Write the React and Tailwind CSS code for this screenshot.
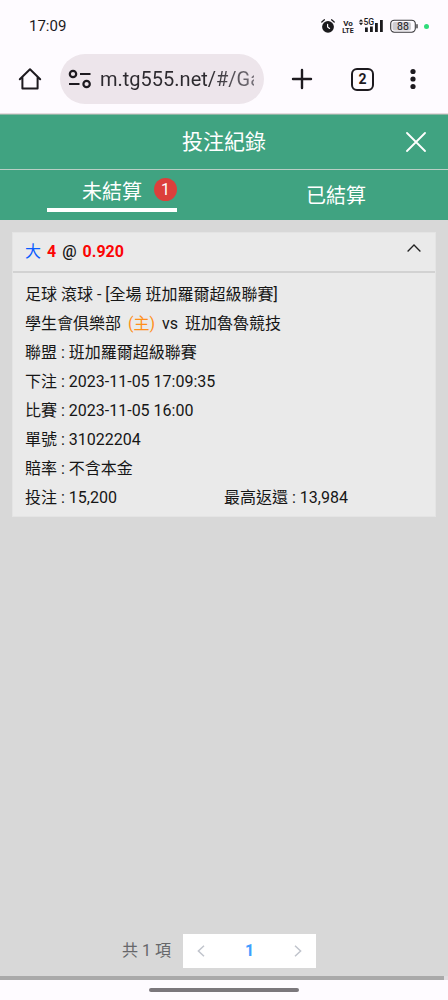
import React, { useState } from "react";

const details = [
  { label: "聯盟", value: "班加羅爾超級聯賽" },
  { label: "下注", value: "2023-11-05 17:09:35" },
  { label: "比賽", value: "2023-11-05 16:00" },
  { label: "單號", value: "31022204" },
  { label: "賠率", value: "不含本金" },
];

function StatusBar() {
  return (
    <div className="flex h-[52px] items-center justify-between pl-[29px] pr-[19px] text-[#1b1a1d]">
      <span className="text-[15px]">17:09</span>
      <div className="flex items-center">
        {/* alarm */}
        <svg className="h-4 w-4" viewBox="0 0 16 16" fill="none" aria-hidden="true">
          <circle cx="8" cy="8.8" r="5.9" fill="currentColor" />
          <path d="M1.8 4 4.4 1.8M14.2 4 11.6 1.8" stroke="currentColor" strokeWidth="1.3" strokeLinecap="round" />
          <path d="M7.6 6.4v2.6l2 1.4" stroke="#fefbff" strokeWidth="1.2" strokeLinecap="round" />
        </svg>
        <svg className="ml-[6px] h-4 w-3" viewBox="0 0 12 16" fill="currentColor" aria-hidden="true">
          <text x="6" y="7.6" fontSize="8" fontWeight="700" textAnchor="middle">Vo</text>
          <text x="6" y="14.6" fontSize="7" fontWeight="700" textAnchor="middle">LTE</text>
        </svg>
        {/* 5G signal */}
        <svg className="ml-1 h-4 w-[26px]" viewBox="0 0 26 16" fill="currentColor" aria-hidden="true">
          <path d="M3 1.2 5.2 3.6H.8ZM3 7.2.8 4.8H5.2Z" />
          <text x="5.4" y="7.2" fontSize="8.6" fontWeight="500">5G</text>
          <rect x="7" y="9.5" width="2.8" height="4.5" />
          <rect x="12" y="8.5" width="2.8" height="5.5" />
          <rect x="17" y="5" width="2.8" height="9" />
          <rect x="22" y="2" width="2.8" height="12" />
        </svg>
        {/* battery */}
        <svg className="ml-[6px] h-4 w-7" viewBox="0 0 28 16" aria-hidden="true">
          <rect x=".7" y="2.2" width="24.6" height="12" rx="3.6" fill="#fefbff" stroke="#3a393c" strokeWidth="1.1" />
          <rect x="2.5" y="4" width="18.5" height="8.4" rx="2" fill="#cfcdd1" />
          <rect x="26.3" y="6" width="1.4" height="4.4" rx=".7" fill="#3a393c" />
          <text x="13" y="12" fontSize="10.5" textAnchor="middle" fill="#1b1a1d">88</text>
        </svg>
        <span className="ml-[6px] h-[5px] w-[5px] rounded-full bg-[#2fdc7a]" />
      </div>
    </div>
  );
}

function BrowserBar() {
  return (
    <div className="flex h-[62px] items-start border-b border-[#e6dade] pl-[18px] pr-8 pt-[2px] text-[#1d1a1f]">
      <button type="button" aria-label="首頁" className="flex h-[50px] w-6 items-center">
        <svg className="h-6 w-6" viewBox="0 0 24 24" fill="none" stroke="currentColor" strokeWidth="2" strokeLinejoin="round" strokeLinecap="round">
          <path d="M1.8 12.2 12 2.2l10.2 10M4.4 10.2v11.4h15.2V10.2" />
        </svg>
      </button>
      <div className="ml-[18px] flex h-[50px] min-w-0 flex-1 items-center rounded-full bg-[#ede5eb] pl-2 pr-[10px]">
        <svg className="h-6 w-6 shrink-0" viewBox="0 0 24 24" fill="none" stroke="currentColor" strokeWidth="2.2" aria-hidden="true">
          <circle cx="5" cy="7" r="3.2" />
          <path d="M12 7h10.5M1 17h10.5" />
          <circle cx="18.6" cy="17" r="3.2" />
        </svg>
        <input
          type="text"
          aria-label="網址"
          readOnly
          defaultValue="m.tg555.net/#/GameRecord"
          className="ml-2 w-0 min-w-0 flex-1 bg-linear-to-r from-[#2d2a2f] from-70% to-[#77727a] bg-clip-text text-xl text-transparent outline-none"
        />
      </div>
      <button type="button" aria-label="新分頁" className="ml-[26px] flex h-[50px] w-6 items-center">
        <svg className="h-6 w-6" viewBox="0 0 24 24" stroke="currentColor" strokeWidth="2.4" strokeLinecap="round">
          <path d="M12 3v18M3 12h18" />
        </svg>
      </button>
      <button type="button" aria-label="分頁" className="ml-9 flex h-[50px] w-6 items-center justify-end">
        <span className="flex h-[23px] w-[23px] items-center justify-center rounded-[6px] border-2 border-current text-sm font-bold leading-none">
          2
        </span>
      </button>
      <button type="button" aria-label="選單" className="ml-9 flex h-[50px] w-[6px] items-center">
        <svg className="h-6 w-[6px]" viewBox="0 0 6 24" fill="currentColor">
          <circle cx="3" cy="4.5" r="2.6" />
          <circle cx="3" cy="12" r="2.6" />
          <circle cx="3" cy="19.5" r="2.6" />
        </svg>
      </button>
    </div>
  );
}

function BetCard() {
  const [open, setOpen] = useState(true);

  return (
    <section className="border border-[#e4e4e4] bg-[#eaeaea] text-base text-[#161616]">
      <button
        type="button"
        aria-expanded={open}
        onClick={() => setOpen(!open)}
        className="flex h-10 w-full items-center gap-[6px] border-b-2 border-[#d2d2d2] px-3 text-left"
      >
        <span className="text-[#0a5cff]">大</span>
        <span className="font-bold text-[#fb0505]">4</span>
        <span className="font-medium">@</span>
        <span className="font-bold text-[#fb0505]">0.920</span>
        <svg className="mb-2 ml-auto mr-[2px] h-2 w-[14px]" viewBox="0 0 14 8" fill="none" stroke="#222" strokeWidth="1.3">
          <path d="M.6 7.5 7 1l6.4 6.5" />
        </svg>
      </button>
      {open && (
        <div className="px-3 pb-1 pt-[7px] leading-[29px]">
          <p>足球 滾球 - [全場 班加羅爾超級聯賽]</p>
          <p className="flex flex-wrap gap-x-[7px]">
            <span>學生會俱樂部</span>
            <span className="text-[#ff8f1a]">(主)</span>
            <span>vs</span>
            <span>班加魯魯競技</span>
          </p>
          {details.map((item) => (
            <p key={item.label}>
              {item.label} : {item.value}
            </p>
          ))}
          <div className="grid grid-cols-2">
            <p>投注 : 15,200</p>
            <p>最高返還 : 13,984</p>
          </div>
        </div>
      )}
    </section>
  );
}

function Pagination() {
  return (
    <nav aria-label="分頁" className="flex items-center justify-center gap-3 pb-2 pr-[10px]">
      <span className="text-base text-[#66676a]">共 1 項</span>
      <div className="flex h-[34px] w-[133px] items-center justify-between bg-white px-[14px]">
        <button type="button" aria-label="上一頁" className="text-[#c0c4cc]">
          <svg className="h-3 w-2" viewBox="0 0 8 12" fill="none" stroke="currentColor" strokeWidth="1.5">
            <path d="M7 .8 1.4 6 7 11.2" />
          </svg>
        </button>
        <button type="button" aria-current="page" className="text-base font-bold text-[#409eff]">
          1
        </button>
        <button type="button" aria-label="下一頁" className="text-[#c0c4cc]">
          <svg className="h-3 w-2" viewBox="0 0 8 12" fill="none" stroke="currentColor" strokeWidth="1.5">
            <path d="M1 .8 6.6 6 1 11.2" />
          </svg>
        </button>
      </div>
    </nav>
  );
}

export default function App() {
  return (
    <div className="flex min-h-screen flex-col bg-[#fefbff] font-[Roboto,'Noto_Sans_CJK_TC',sans-serif]">
      <StatusBar />
      <BrowserBar />

      <header className="border-t border-[#8fb5a5] bg-[#40a381] text-white">
        <div className="grid h-[54px] grid-cols-[1fr_auto_1fr] items-center">
          <h1 className="col-start-2 pt-[2px] text-[21px]">投注紀錄</h1>
          <button type="button" aria-label="關閉" className="mr-[22px] justify-self-end">
            <svg className="h-5 w-5" viewBox="0 0 20 20" stroke="currentColor" strokeWidth="1.8" strokeLinecap="round">
              <path d="m1 1 18 18M19 1 1 19" />
            </svg>
          </button>
        </div>
        <div role="tablist" className="grid h-[51px] grid-cols-2 border-t border-[#b9cfc5] text-xl">
          <button type="button" role="tab" aria-selected="true" className="flex justify-center">
            <span className="relative flex h-[42px] w-[130px] items-center justify-center border-b-4 border-white pt-[6px]">
              未結算
              <span className="absolute right-0 top-2 flex h-[23px] w-[23px] items-center justify-center rounded-full bg-[#dc3f3b] text-base leading-none">
                1
              </span>
            </span>
          </button>
          <button type="button" role="tab" aria-selected="false" className="pt-[2px]">
            已結算
          </button>
        </div>
      </header>

      <main className="flex flex-1 flex-col justify-between bg-[#d8d8d8] px-3 pt-3">
        <BetCard />
        <Pagination />
      </main>

      <div className="bg-[#e0dde0]">
        <div className="h-1 w-[99%] bg-[#a9a9a9]" />
      </div>
      <footer className="flex h-5 items-center justify-center">
        <div className="h-1 w-1/3 rounded-full bg-[#7b777c]" />
      </footer>
    </div>
  );
}
